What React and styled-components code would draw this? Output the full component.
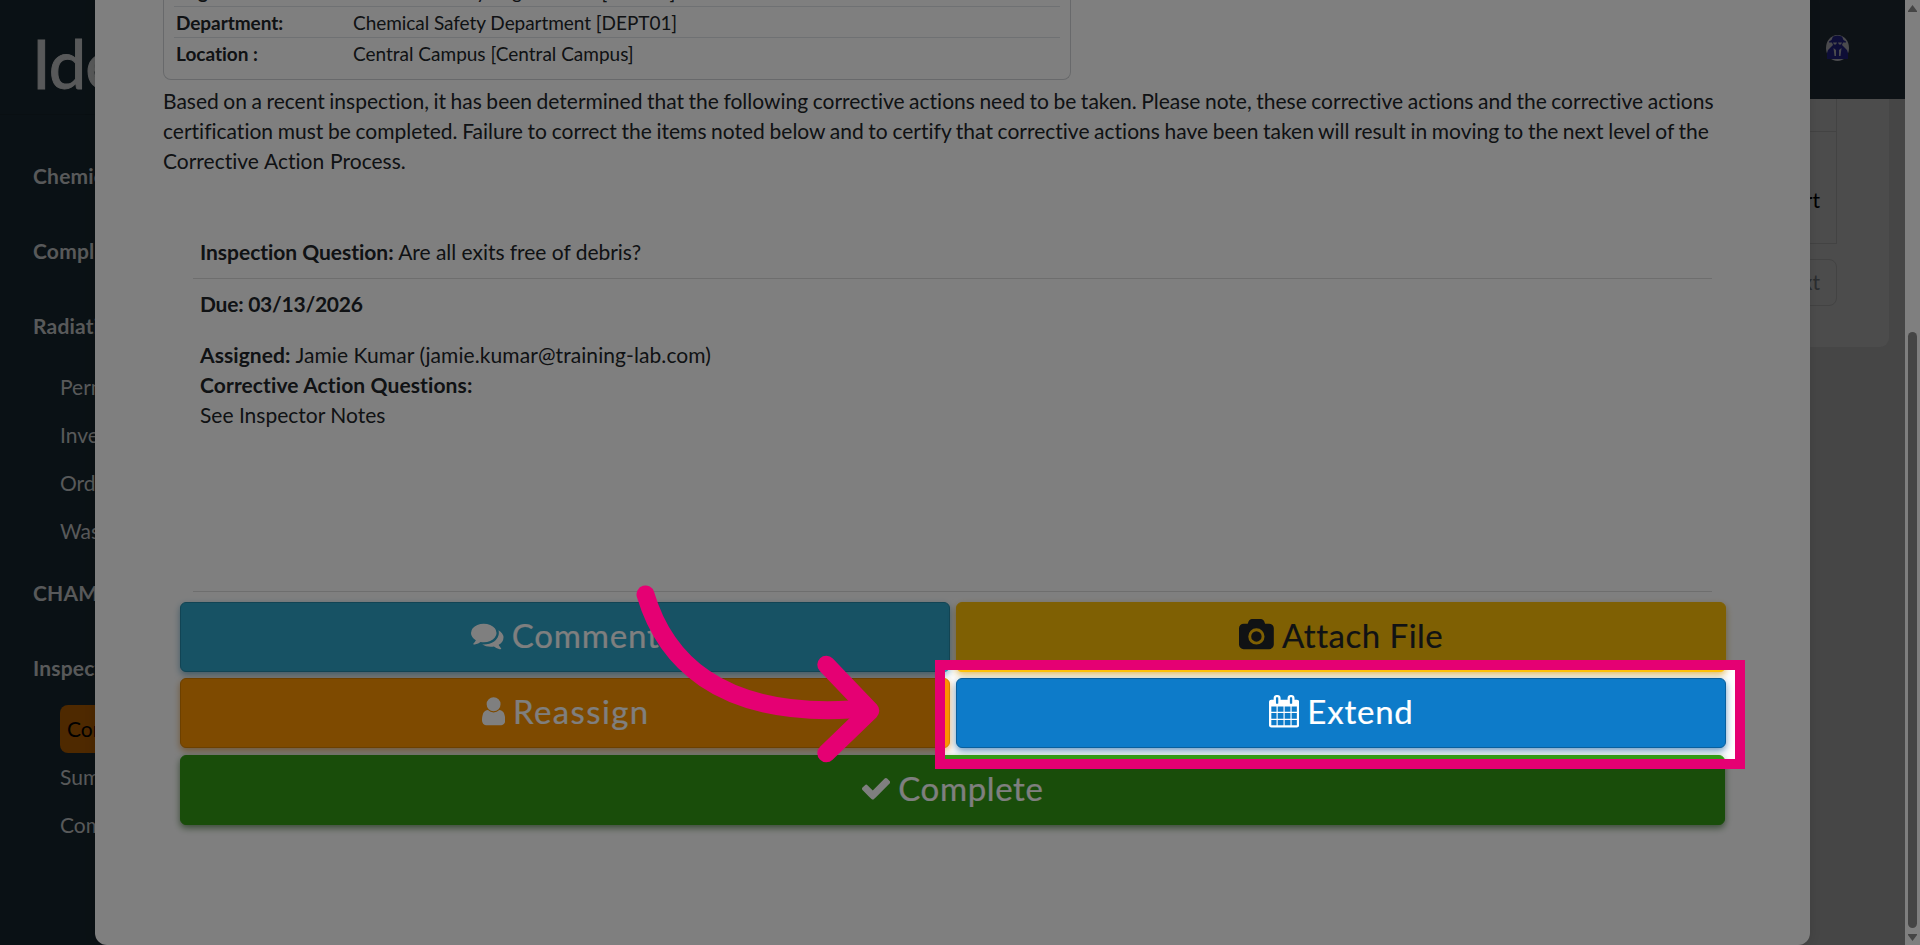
import React from 'react';
import styled, { createGlobalStyle } from 'styled-components';

const GlobalStyle = createGlobalStyle`
  * {
    box-sizing: border-box;
  }
  body {
    margin: 0;
    overflow: hidden;
    font-family: Lato, 'Open Sans', sans-serif;
    font-variant-ligatures: none;
    color: #212529;
  }
`;

const Screen = styled.div`
  position: relative;
  display: flex;
  width: 1920px;
  height: 945px;
  overflow: hidden;
  background: #8c8c8c;
`;

/* ---------- page behind the dialog ---------- */

const Sidebar = styled.nav`
  width: 300px;
  flex-shrink: 0;
  background: #15232a;
  color: #b1b3b4;
  font-size: 21px;
  line-height: 30px;
  white-space: nowrap;
`;

const Logo = styled.div`
  height: 115px;
  padding: 22px 0 0 32px;
  border-bottom: 1px solid #121e24;
  font-size: 67px;
  line-height: 82px;
  letter-spacing: -1px;
  -webkit-text-stroke: 1px currentColor;
`;

const NavHeading = styled.div`
  height: 30px;
  margin-top: ${(props) => props.$top || 45}px;
  padding-left: 33px;
  font-weight: 700;
  letter-spacing: 0.2px;
`;

const NavList = styled.div`
  display: flex;
  flex-direction: column;
  padding: ${(props) => props.$top}px 20px 0 60px;
`;

const NavItem = styled.a`
  height: 48px;
  padding: 9px 0 0 ${(props) => (props.$active ? 7 : 0)}px;
  border-radius: 8px;
  background: ${(props) => (props.$active ? '#9c5200' : 'transparent')};
  color: ${(props) => (props.$active ? '#000' : 'inherit')};
`;

const Main = styled.main`
  flex: 1;
`;

const TopBar = styled.header`
  display: flex;
  align-items: center;
  justify-content: flex-end;
  height: 99px;
  padding: 0 56px 3px 0;
  background: #1a242c;
`;

const Panel = styled.section`
  width: 1589px;
  height: 248px;
  padding-right: 52px;
  border-radius: 0 0 9px 9px;
  background: #989898;
  font-size: 21px;
  line-height: 30px;
  text-align: right;
`;

const PanelRow = styled.div`
  height: ${(props) => props.$height}px;
  padding: ${(props) => props.$pad || 0}px 16px 0 0;
  border: solid #868686;
  border-width: 0 1px 1px 0;
  color: #000;
`;

const NextButton = styled.div`
  display: inline-block;
  width: 120px;
  height: 47px;
  margin-top: 15px;
  padding: 7px 16px 0 0;
  border: 1px solid #868686;
  border-radius: 8px;
  color: #565a5e;
`;

const ScrollTrack = styled.div`
  display: flex;
  flex-direction: column;
  align-items: center;
  justify-content: space-between;
  width: 15px;
  padding: 5px 0 4px;
  background: #fff;
`;

const ScrollThumb = styled.div`
  width: 9px;
  height: 596px;
  margin-top: 313px;
  border-radius: 5px;
  background: #8b8b8b;
`;

/* ---------- dialog ---------- */

const Dialog = styled.div`
  position: absolute;
  top: 0;
  left: 95px;
  width: 1715px;
  height: 945px;
  padding: 0 68px;
  border-radius: 0 0 12px 12px;
  background: #fff;
  box-shadow: 0 0 12px rgba(0, 0, 0, 0.12);
  font-size: 21px;
  line-height: 30px;
`;

const DetailCard = styled.div`
  width: 908px;
  height: 80px;
  overflow: hidden;
  padding: 0 10px;
  border: 1px solid #d0d3d6;
  border-top: 0;
  border-radius: 0 0 8px 8px;
  font-size: 19px;
  line-height: 32px;
`;

const DetailRow = styled.div`
  display: flex;
  height: 31px;
  padding-left: 2px;
  border-bottom: 1px solid ${(props) => (props.$last ? 'transparent' : '#dee2e6')};
  margin-top: ${(props) => (props.$first ? -24 : 0)}px;
  letter-spacing: ${(props) => (props.$last ? 0 : -0.05)}px;

  b {
    width: 177px;
  }
`;

const Intro = styled.p`
  margin: 6px 0 0;
  white-space: nowrap;
`;

const IntroLine = styled.span`
  display: block;
  word-spacing: ${(props) => props.$gap}px;
`;

const Question = styled.div`
  margin: 61px 30px 0;
  height: 355px;
  border-bottom: 1px solid #dcdcdc;
`;

const Line = styled.div`
  height: ${(props) => props.$height || 30}px;
  padding-left: 7px;
  border-bottom: ${(props) => (props.$ruled ? '1px solid #dcdcdc' : 0)};
  letter-spacing: ${(props) => props.$spacing || 0}px;
`;

const Actions = styled.div`
  display: grid;
  grid-template-columns: 770px 770px;
  grid-template-rows: 70px 70px 70px;
  column-gap: 6px;
  row-gap: 6px;
  margin: 10px 0 0 17px;
`;

const tones = {
  info: { bg: '#2ea4c8', edge: '#2489a8', fg: '#fff', glow: '46, 130, 170' },
  warning: { bg: '#ffc107', edge: '#ffc107', fg: '#212529', glow: '205, 145, 0' },
  orange: { bg: '#fc9400', edge: '#d98000', fg: '#fff', glow: '205, 125, 20' },
  primary: { bg: '#0d7bc9', edge: '#095f9d', fg: '#fff', glow: '9, 85, 150' },
  success: { bg: '#339a14', edge: '#339a14', fg: '#fff', glow: '20, 80, 10' },
};

const ActionButton = styled.button`
  display: flex;
  align-items: center;
  justify-content: center;
  gap: 8px;
  grid-column: ${(props) => (props.$wide ? '1 / 3' : 'auto')};
  width: ${(props) => (props.$wide ? 1545 : 770)}px;
  margin: ${(props) => (props.$wide ? '1px 0 -1px' : 0)};
  padding: 0 0 5px;
  border: 1px solid ${(props) => tones[props.$tone].edge};
  border-radius: 6px;
  background: ${(props) => tones[props.$tone].bg};
  color: ${(props) => tones[props.$tone].fg};
  box-shadow: 0 3px 7px rgba(${(props) => tones[props.$tone].glow}, 0.6);
  font-family: Lato, sans-serif;
  font-size: 33px;
  line-height: 40px;
  -webkit-text-stroke: 0.2px currentColor;

  svg {
    height: 32.5px;
    margin-top: 2px;
    fill: currentColor;
    stroke: none;
  }
`;

const Label = styled.span`
  letter-spacing: ${(props) => props.$spacing}px;
  margin-right: ${(props) => -props.$spacing}px;
`;

/* ---------- walkthrough layer ---------- */

const Spotlight = styled.div`
  position: absolute;
  top: 660px;
  left: 935px;
  width: 810px;
  height: 109px;
  border: 10px solid #e50073;
  box-shadow: 0 0 0 2000px rgba(0, 0, 0, 0.5);
`;

const Pointer = styled.svg`
  position: absolute;
  top: 570px;
  left: 620px;
  fill: none;
  stroke: #e50073;
  stroke-width: 18;
  stroke-linecap: round;
  stroke-linejoin: round;
`;

const icons = {
  comments: {
    box: '0 0 1792 1792',
    d: 'M1408 768q0 139-94 257t-256.5 186.5-353.5 68.5q-86 0-176-16-124 88-278 128-36 9-86 16h-3q-11 0-20.5-8t-11.5-21q-1-3-1-6.5t.5-6.5 2-6l2.5-5 3.5-5.5 4-5 4.5-5 4-4.5q5-6 23-25t26-29.5 22.5-29 25-38.5 20.5-44q-124-72-195-177t-71-224q0-139 94-257t256.5-186.5 353.5-68.5 353.5 68.5 256.5 186.5 94 257zm384 256q0 120-71 224.5t-195 176.5q10 24 20.5 44t25 38.5 22.5 29 26 29.5 23 25q1 1 4 4.5t4.5 5 4 5 3.5 5.5l2.5 5 2 6 .5 6.5-1 6.5q-3 14-13 22t-22 7q-50-7-86-16-154-40-278-128-90 16-176 16-271 0-472-132 58 4 88 4 161 0 309-45t264-129q125-92 192-212t67-254q0-77-23-152 129 71 204 178t75 230z',
  },
  camera: {
    box: '0 0 1920 1792',
    d: 'M960 672q119 0 203.5 84.5t84.5 203.5-84.5 203.5-203.5 84.5-203.5-84.5-84.5-203.5 84.5-203.5 203.5-84.5zm704-416q106 0 181 75t75 181v896q0 106-75 181t-181 75h-1408q-106 0-181-75t-75-181v-896q0-106 75-181t181-75h224l51-136q19-49 69.5-84.5t103.5-35.5h512q53 0 103.5 35.5t69.5 84.5l51 136h224zm-704 1152q185 0 316.5-131.5t131.5-316.5-131.5-316.5-316.5-131.5-316.5 131.5-131.5 316.5 131.5 316.5 316.5 131.5z',
  },
  user: {
    box: '256 0 1280 1792',
    d: 'M1536 1399q0 109-62.5 187t-150.5 78h-854q-88 0-150.5-78t-62.5-187q0-85 8.5-160.5t31.5-152 58.5-131 94-89 134.5-34.5q131 128 313 128t313-128q76 0 134.5 34.5t94 89 58.5 131 31.5 152 8.5 160.5zm-256-887q0 159-112.5 271.5t-271.5 112.5-271.5-112.5-112.5-271.5 112.5-271.5 271.5-112.5 271.5 112.5 112.5 271.5z',
  },
  calendar: {
    box: '64 0 1664 1792',
    d: 'M192 1664h288v-288h-288v288zm352 0h320v-288h-320v288zm-352-352h288v-320h-288v320zm352 0h320v-320h-320v320zm-352-384h288v-288h-288v288zm736 736h320v-288h-320v288zm-384-736h320v-288h-320v288zm768 736h288v-288h-288v288zm-384-352h320v-320h-320v320zm-352-864v-288q0-13-9.5-22.5t-22.5-9.5h-64q-13 0-22.5 9.5t-9.5 22.5v288q0 13 9.5 22.5t22.5 9.5h64q13 0 22.5-9.5t9.5-22.5zm736 864h288v-320h-288v320zm-384-384h320v-288h-320v288zm384 0h288v-288h-288v288zm32-480v-288q0-13-9.5-22.5t-22.5-9.5h-64q-13 0-22.5 9.5t-9.5 22.5v288q0 13 9.5 22.5t22.5 9.5h64q13 0 22.5-9.5t9.5-22.5zm384-64v1280q0 52-38 90t-90 38h-1408q-52 0-90-38t-38-90v-1280q0-52 38-90t90-38h128v-96q0-66 47-113t113-47h64q66 0 113 47t47 113v96h384v-96q0-66 47-113t113-47h64q66 0 113 47t47 113v96h128q52 0 90 38t38 90z',
  },
  check: {
    box: '121 0 1550 1792',
    d: 'M1671 566q0 40-28 68l-724 724-136 136q-28 28-68 28t-68-28l-136-136-362-362q-28-28-28-68t28-68l136-136q28-28 68-28t68 28l294 295 656-657q28-28 68-28t68 28l136 136q28 28 28 68z',
  },
};

const actions = [
  { label: 'Comment', icon: 'comments', tone: 'info', spacing: 0.8 },
  { label: 'Attach File', icon: 'camera', tone: 'warning', spacing: 0.5 },
  { label: 'Reassign', icon: 'user', tone: 'orange', spacing: 1.4 },
  { label: 'Extend', icon: 'calendar', tone: 'primary', spacing: 0.8 },
  { label: 'Complete', icon: 'check', tone: 'success', spacing: 0.6, wide: true },
];

function Icon({ name }) {
  return (
    <svg viewBox={icons[name].box}>
      <path d={icons[name].d} />
    </svg>
  );
}

function Avatar() {
  return (
    <svg width="23" height="26" viewBox="0 0 23 26">
      <ellipse cx="11.5" cy="13" rx="11.5" ry="13" fill="#95959b" />
      <path
        fill="#1c1c6e"
        d="M7 1.500L11.500 .5L16 1.500L17.500 5L20 6.500V7.500H17L16 10L18 12L21 15L22 18V24H1V18L2 15L5 12L7 10L6 7.500H3V6.500L5.500 5z"
      />
      <path fill="#95959b" d="M7 7.500h4l-1 2H8zM12 7.500h4l-1 2h-2zM7.500 13l2.500 2v6H8.500zM15.500 13L13 15v6h1.500z" />
    </svg>
  );
}

export default function App() {
  return (
    <>
      <GlobalStyle />
      <Screen>
        <Sidebar>
          <Logo>Idea</Logo>
          <NavHeading $top={46}>Chemicals</NavHeading>
          <NavHeading>Compliance</NavHeading>
          <NavHeading>Radiation</NavHeading>
          <NavList $top={22}>
            <NavItem>Permits</NavItem>
            <NavItem>Inventory</NavItem>
            <NavItem>Orders</NavItem>
            <NavItem>Waste</NavItem>
          </NavList>
          <NavHeading $top={23}>CHAMP</NavHeading>
          <NavHeading>Inspections</NavHeading>
          <NavList $top={22}>
            <NavItem $active>Corrective</NavItem>
            <NavItem>Summary</NavItem>
            <NavItem>Compare</NavItem>
          </NavList>
        </Sidebar>
        <Main>
          <TopBar>
            <Avatar />
          </TopBar>
          <Panel>
            <PanelRow $height={33} />
            <PanelRow $height={112} $pad={53}>Report</PanelRow>
            <NextButton>Next</NextButton>
          </Panel>
        </Main>
        <ScrollTrack>
          <svg width="9" height="7" viewBox="0 0 9 7">
            <path d="M4.500 0L9 6v1H0V6z" fill="#8b8b8b" />
          </svg>
          <ScrollThumb />
          <svg width="9" height="7" viewBox="0 0 9 7">
            <path d="M4.500 7L9 1V0H0v1z" fill="#8b8b8b" />
          </svg>
        </ScrollTrack>

        <Dialog>
          <DetailCard>
            <DetailRow $first>
              <b>Organization:</b>
              <span>Chemical Safety Organization [ORG01]</span>
            </DetailRow>
            <DetailRow>
              <b>Department:</b>
              <span>Chemical Safety Department [DEPT01]</span>
            </DetailRow>
            <DetailRow $last>
              <b>Location :</b>
              <span>Central Campus [Central Campus]</span>
            </DetailRow>
          </DetailCard>
          <Intro>
            <IntroLine $gap={-0.85}>
              Based on a recent inspection, it has been determined that the following corrective actions need to be taken. Please note, these corrective actions and the corrective actions
            </IntroLine>
            <IntroLine $gap={-0.73}>
              certification must be completed. Failure to correct the items noted below and to certify that corrective actions have been taken will result in moving to the next level of the
            </IntroLine>
            <IntroLine $gap={0.5}>Corrective Action Process.</IntroLine>
          </Intro>
          <Question>
            <Line $height={42} $ruled $spacing={-0.03}>
              <b>Inspection Question:</b> Are all exits free of debris?
            </Line>
            <Line $height={10} />
            <Line $height={51} $spacing={-0.25}>
              <b>Due: 03/13/2026</b>
            </Line>
            <Line $spacing={0.08}>
              <b>Assigned:</b> Jamie Kumar (jamie.kumar@training-lab.com)
            </Line>
            <Line $spacing={0.11}>
              <b>Corrective Action Questions:</b>
            </Line>
            <Line>See Inspector Notes</Line>
          </Question>
          <Actions>
            {actions.map((a) => (
              <ActionButton key={a.label} $tone={a.tone} $wide={a.wide}>
                <Icon name={a.icon} />
                <Label $spacing={a.spacing}>{a.label}</Label>
              </ActionButton>
            ))}
          </Actions>
        </Dialog>

        <Spotlight />
        <Pointer width="270" height="210" viewBox="620 570 270 210">
          <path d="M645.500 594.500C664 657 716 717 850 709.500" />
          <path d="M826.300 664.700L870.300 710.700L826.300 753.300" />
        </Pointer>
      </Screen>
    </>
  );
}
